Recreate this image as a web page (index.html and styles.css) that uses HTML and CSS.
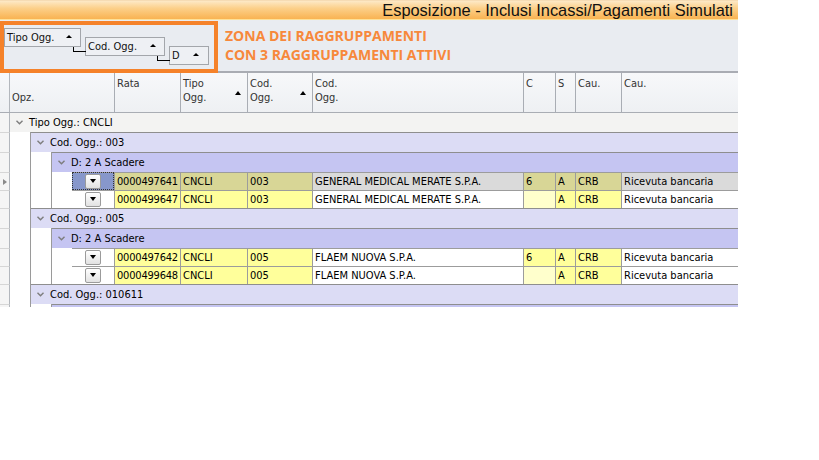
FILE: index.html
```html
<!DOCTYPE html>
<html>
<head>
<meta charset="utf-8">
<link rel="stylesheet" href="styles.css">
</head>
<body>
<div class="app">
  <div class="titlebar">Esposizione - Inclusi Incassi/Pagamenti Simulati</div>
  <div class="panel">
    <div class="groupbox">
      <div class="chip chip-1"><span>Tipo Ogg.</span><i class="tri-up"></i></div>
      <div class="chip chip-2"><span>Cod. Ogg.</span><i class="tri-up"></i></div>
      <div class="chip chip-3"><span>D</span><i class="tri-up"></i></div>
    </div>
    <div class="note">ZONA DEI RAGGRUPPAMENTI<br>CON 3 RAGGRUPPAMENTI ATTIVI</div>
  </div>

  <div class="grid">
    <div class="row hdr">
      <div class="ind"></div>
      <div class="hc w-opzh"><span class="second">Opz.</span></div>
      <div class="hc w-rata"><span>Rata</span></div>
      <div class="hc w-tipo"><span>Tipo<br>Ogg.</span><i class="sort"></i></div>
      <div class="hc w-cod"><span>Cod.<br>Ogg.</span><i class="sort"></i></div>
      <div class="hc w-name"><span>Cod.<br>Ogg.</span></div>
      <div class="hc w-c"><span>C</span></div>
      <div class="hc w-s"><span>S</span></div>
      <div class="hc w-cau"><span>Cau.</span></div>
      <div class="hc w-desc"><span>Cau.</span></div>
    </div>

    <div class="row g1">
      <div class="ind first"></div>
      <div class="grow"><svg class="chev" viewBox="0 0 7 5"><path d="M0.5 0.8 L3.5 3.8 L6.5 0.8"/></svg><span>Tipo Ogg.: CNCLI</span></div>
    </div>

    <div class="row g2">
      <div class="ind"></div><div class="gap"></div>
      <div class="grow"><svg class="chev" viewBox="0 0 7 5"><path d="M0.5 0.8 L3.5 3.8 L6.5 0.8"/></svg><span>Cod. Ogg.: 003</span></div>
    </div>
    <div class="row g3">
      <div class="ind"></div><div class="gap"></div><div class="gap"></div>
      <div class="grow"><svg class="chev" viewBox="0 0 7 5"><path d="M0.5 0.8 L3.5 3.8 L6.5 0.8"/></svg><span>D: 2 A Scadere</span></div>
    </div>
    <div class="row dr selected">
      <div class="ind"><i class="cur"></i></div><div class="gap"></div><div class="gap"></div><div class="sp"></div>
      <div class="c w-opz"><span class="btn"><i class="tri-down"></i></span></div>
      <div class="c w-rata y">0000497641</div>
      <div class="c w-tipo y">CNCLI</div>
      <div class="c w-cod y">003</div>
      <div class="c w-name">GENERAL MEDICAL MERATE S.P.A.</div>
      <div class="c w-c y">6</div>
      <div class="c w-s y">A</div>
      <div class="c w-cau y">CRB</div>
      <div class="c w-desc">Ricevuta bancaria</div>
    </div>
    <div class="row dr">
      <div class="ind"></div><div class="gap"></div><div class="gap"></div><div class="sp"></div>
      <div class="c w-opz"><span class="btn"><i class="tri-down"></i></span></div>
      <div class="c w-rata y">0000499647</div>
      <div class="c w-tipo y">CNCLI</div>
      <div class="c w-cod y">003</div>
      <div class="c w-name">GENERAL MEDICAL MERATE S.P.A.</div>
      <div class="c w-c py"></div>
      <div class="c w-s y">A</div>
      <div class="c w-cau y">CRB</div>
      <div class="c w-desc">Ricevuta bancaria</div>
    </div>

    <div class="row g2">
      <div class="ind"></div><div class="gap"></div>
      <div class="grow"><svg class="chev" viewBox="0 0 7 5"><path d="M0.5 0.8 L3.5 3.8 L6.5 0.8"/></svg><span>Cod. Ogg.: 005</span></div>
    </div>
    <div class="row g3">
      <div class="ind"></div><div class="gap"></div><div class="gap"></div>
      <div class="grow"><svg class="chev" viewBox="0 0 7 5"><path d="M0.5 0.8 L3.5 3.8 L6.5 0.8"/></svg><span>D: 2 A Scadere</span></div>
    </div>
    <div class="row dr">
      <div class="ind"></div><div class="gap"></div><div class="gap"></div><div class="sp"></div>
      <div class="c w-opz"><span class="btn"><i class="tri-down"></i></span></div>
      <div class="c w-rata y">0000497642</div>
      <div class="c w-tipo y">CNCLI</div>
      <div class="c w-cod y">005</div>
      <div class="c w-name">FLAEM NUOVA S.P.A.</div>
      <div class="c w-c y">6</div>
      <div class="c w-s y">A</div>
      <div class="c w-cau y">CRB</div>
      <div class="c w-desc">Ricevuta bancaria</div>
    </div>
    <div class="row dr">
      <div class="ind"></div><div class="gap"></div><div class="gap"></div><div class="sp"></div>
      <div class="c w-opz"><span class="btn"><i class="tri-down"></i></span></div>
      <div class="c w-rata y">0000499648</div>
      <div class="c w-tipo y">CNCLI</div>
      <div class="c w-cod y">005</div>
      <div class="c w-name">FLAEM NUOVA S.P.A.</div>
      <div class="c w-c py"></div>
      <div class="c w-s y">A</div>
      <div class="c w-cau y">CRB</div>
      <div class="c w-desc">Ricevuta bancaria</div>
    </div>

    <div class="row g2">
      <div class="ind"></div><div class="gap"></div>
      <div class="grow"><svg class="chev" viewBox="0 0 7 5"><path d="M0.5 0.8 L3.5 3.8 L6.5 0.8"/></svg><span>Cod. Ogg.: 010611</span></div>
    </div>
    <div class="row sliver">
      <div class="ind"></div><div class="gap"></div><div class="gap"></div>
      <div class="grow"></div>
    </div>
  </div>
</div>
</body>
</html>
```

FILE: styles.css
```css
* { box-sizing: border-box; }

body {
  margin: 0;
  background: #ffffff;
  font-family: "DejaVu Sans Condensed", "DejaVu Sans", sans-serif;
  font-stretch: condensed;
  font-size: 11px;
  color: #000;
}

.app { width: 738px; }

/* title bar */
.titlebar {
  height: 20px;
  padding-right: 5px;
  text-align: right;
  font: 16.4px/19px "Liberation Sans", Arial, sans-serif;
  color: #111;
  background: linear-gradient(#fde9c6 0%, #fcd08a 40%, #f9b352 100%);
  border-top: 1px solid #f6dcb4;
  border-bottom: 1px solid #fde199;
}

/* group panel */
.panel {
  display: flex;
  height: 53px;
  background: #e9ecf1;
}

.groupbox {
  width: 218px;
  height: 52px;
  margin-top: 1px;
  border: 4px solid #f5822a;
  display: flex;
  align-items: flex-start;
  gap: 4px;
}

.chip {
  position: relative;
  height: 19px;
  border: 1px solid #a3a6ab;
  background: #eef0f4;
  display: flex;
  align-items: center;
  justify-content: space-between;
  padding: 0 8px 0 2px;
  line-height: 17px;
  color: #111;
}
.chip-1 { width: 77px; margin-top: 3px; }
.chip-2 { width: 80px; margin-top: 12px; }
.chip-3 { width: 40px; margin-top: 21px; padding-right: 9px; }

.chip-2::before, .chip-3::before {
  content: "";
  position: absolute;
  left: -13px;
  top: 9px;
  width: 12px;
  height: 4px;
  border-left: 1px solid #000;
  border-bottom: 1px solid #000;
}

.tri-up {
  display: block;
  width: 0; height: 0;
  border-left: 3px solid transparent;
  border-right: 3px solid transparent;
  border-bottom: 3px solid #000;
  margin-top: -2px;
}

.note {
  flex: 1;
  border-bottom: 2px solid #a9acb3;
  padding: 6px 0 0 7px;
  font: bold 14px/19px "Open Sans", sans-serif;
  color: #f7883b;
}

/* grid */
.row { display: flex; }

.ind {
  width: 10px;
  flex: none;
  border-right: 1px solid #b3b7bd;
  border-top: 1px solid #d6d6d6;
  background: #f5f5f5;
  display: flex;
  align-items: center;
}
.ind.first { border-top: none; }

.cur {
  display: block;
  width: 0; height: 0;
  margin-left: 3px;
  border-top: 3px solid transparent;
  border-bottom: 3px solid transparent;
  border-left: 4px solid #8a8a8a;
}

.gap {
  width: 21px;
  flex: none;
  background: #fff;
  border-right: 1px solid #9a9a9a;
}
.sp { width: 20px; flex: none; background: #fff; }

/* header */
.hdr {
  height: 40px;
  border-bottom: 1px solid #a9adb4;
  background: linear-gradient(#f7f8fa, #eef0f3);
  color: #333;
}
.hdr .ind { border-top: none; background: transparent; }

.hc {
  flex: none;
  display: flex;
  justify-content: space-between;
  align-items: flex-start;
  padding: 4px 6px 0 2px;
  line-height: 14px;
  border-left: 1px solid #a9adb4;
}
.hc.w-opzh { width: 104px; border-left: none; }
.hc .second { margin-top: 14px; }

.sort {
  display: block;
  width: 0; height: 0;
  margin-top: 14px;
  border-left: 3px solid transparent;
  border-right: 3px solid transparent;
  border-bottom: 4px solid #000;
}

.w-rata { width: 66px; }
.w-tipo { width: 67px; }
.w-cod  { width: 65px; }
.w-name { width: 211px; }
.w-c    { width: 32px; }
.w-s    { width: 20px; }
.w-cau  { width: 46px; }
.w-desc { width: 117px; }
.w-opz  { width: 42px; }

/* group rows */
.grow {
  flex: 1;
  display: flex;
  align-items: center;
  gap: 6px;
  padding-left: 6px;
  border-top: 1px solid #8e8e8e;
  line-height: 18px;
  white-space: nowrap;
}
.chev { width: 7px; height: 5px; flex: none; }
.chev path { fill: none; stroke: #7d7d7d; stroke-width: 1.4; }

.g1 { height: 19px; }
.g1 .grow { border-top: none; background: #f3f3f2; }
.g2 { height: 20px; }
.g2 .grow { background: #dcdcf5; }
.g3 { height: 20px; }
.g3 .grow { background: #c5c5f2; }
.sliver { height: 3px; }
.sliver .grow { background: #c5c5f2; }

/* data rows */
.dr { height: 18px; }

.c {
  flex: none;
  border-top: 1px solid #9c9c9c;
  border-left: 1px solid #9c9c9c;
  padding-left: 2px;
  line-height: 17px;
  white-space: nowrap;
  overflow: hidden;
  background: #fff;
}
.c.w-rata { letter-spacing: -0.2px; }
.c.w-opz {
  border-left: none;
  display: flex;
  align-items: center;
  padding-left: 13px;
}
.c.y  { background: #ffff9b; }
.c.py { background: #ffffcc; }

.selected .c.w-opz {
  background: #8797cb;
  outline: 1px dotted #333;
  outline-offset: -1px;
}
.selected .c.y { background: #d8d696; }
.selected .c.w-name, .selected .c.w-desc { background: #dadada; }

.btn {
  width: 16px;
  height: 15px;
  border: 1px solid #9b9b9b;
  border-radius: 2px;
  background: linear-gradient(#ffffff, #e2e2e2);
  display: flex;
  align-items: center;
  justify-content: center;
}
.tri-down {
  display: block;
  width: 0; height: 0;
  border-left: 3px solid transparent;
  border-right: 3px solid transparent;
  border-top: 4px solid #000;
  margin-top: -2px;
}
```
